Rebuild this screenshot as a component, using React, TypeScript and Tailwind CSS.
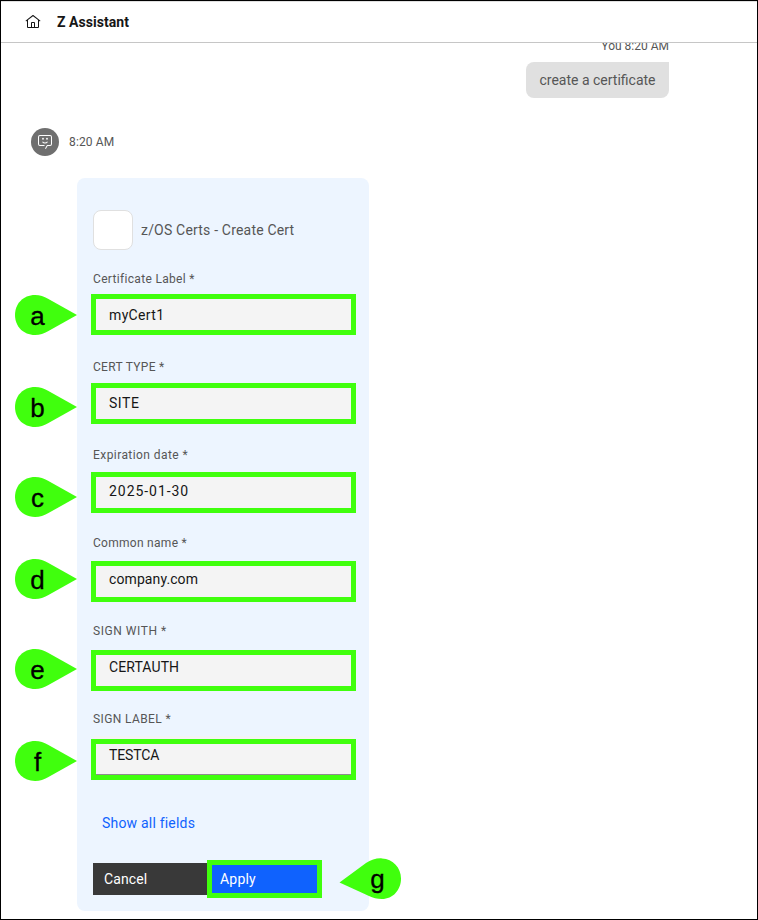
type Field = { label: string; value: string; labelClass: string; valueClass: string; frame: string; text: string; strip?: boolean };

const fields: Field[] = [
  { label: 'Certificate Label *', value: 'myCert1', labelClass: 'tracking-[0.32px]', valueClass: 'tracking-[0.35px]', frame: 'mt-[6px]', text: 'top-[6px]' },
  { label: 'CERT TYPE *', value: 'SITE', labelClass: 'tracking-[0.3px]', valueClass: 'tracking-[0.55px]', frame: 'mt-[7px]', text: 'top-[5px]' },
  { label: 'Expiration date *', value: '2025-01-30', labelClass: 'tracking-[0.43px]', valueClass: 'tracking-[0.95px]', frame: 'mt-[8px]', text: 'top-[4px]' },
  { label: 'Common name *', value: 'company.com', labelClass: 'tracking-[0.28px]', valueClass: 'tracking-[0.1px]', frame: 'mt-[9px]', text: 'top-[3px]' },
  { label: 'SIGN WITH *', value: 'CERTAUTH', labelClass: 'tracking-[0.55px]', valueClass: 'tracking-[0.1px]', frame: 'mt-[10px]', text: 'top-[2px]' },
  { label: 'SIGN LABEL *', value: 'TESTCA', labelClass: 'tracking-[0.38px]', valueClass: 'tracking-[-0.15px]', frame: 'mt-[11px]', text: 'top-[1px]', strip: true },
];

const markers = [
  { letter: 'a', place: 'top-[293px]' },
  { letter: 'b', place: 'top-[385px]' },
  { letter: 'c', place: 'top-[475px]' },
  { letter: 'd', place: 'top-[557px]' },
  { letter: 'e', place: 'top-[647px]' },
  { letter: 'f', place: 'top-[739px]' },
];

function HomeIcon() {
  return (
    <svg width="16" height="16" viewBox="0 0 32 32" fill="#161616">
      <path d="M16.61 2.21a1 1 0 0 0-1.24 0L1 13.42 2.24 15 4 13.62V26a2 2 0 0 0 2 2h20a2 2 0 0 0 2-2V13.63L29.76 15 31 13.43ZM18 26h-4v-8h4Zm2 0v-8a2 2 0 0 0-2-2h-4a2 2 0 0 0-2 2v8H6V12.06l10-7.79 10 7.8V26Z" />
    </svg>
  );
}

function BotIcon() {
  return (
    <svg width="16" height="16" viewBox="0 0 32 32" fill="#fff">
      <path d="M16 19a6.99 6.99 0 0 1-5.833-3.129l1.666-1.107a5 5 0 0 0 8.334 0l1.666 1.107A6.99 6.99 0 0 1 16 19Z" />
      <circle cx="20" cy="9.5" r="1.8" />
      <circle cx="12" cy="9.5" r="1.8" />
      <path d="M17.736 30 16 29l4-7h6a2 2 0 0 0 2-2V6a2 2 0 0 0-2-2H6a2 2 0 0 0-2 2v14a2 2 0 0 0 2 2h9v2H6a4 4 0 0 1-4-4V6a4 4 0 0 1 4-4h20a4 4 0 0 1 4 4v14a4 4 0 0 1-4 4h-4.835Z" />
    </svg>
  );
}

function Marker({ letter, place }: { letter: string; place: string }) {
  return (
    <div className={`absolute left-[13px] h-[42px] w-[64px] ${place}`}>
      <svg className="absolute inset-0" width="64" height="42" viewBox="0 0 64 42">
        <path d="M21 1C9 1 1 10 1 21s8 20 20 20c5 0 9-1.500 13-3.700L63 21 34 4.700C30 2.500 26 1 21 1Z" fill="#40ff0d" />
      </svg>
      <span className="absolute left-0 top-[7px] w-[47px] text-center font-['Liberation_Sans',Arial,sans-serif] text-[26px] leading-[30px] text-black [-webkit-text-stroke:0.3px_black]">{letter}</span>
    </div>
  );
}

export default function App() {
  return (
    <div className="relative flex h-[920px] w-[758px] flex-col overflow-hidden border border-black bg-white font-[Roboto,'Noto_Sans',sans-serif] text-sm text-[#565656]">
      <header className="flex h-[42px] shrink-0 items-center border-t border-b border-t-[#e0e0e0] border-b-[#c6c6c6] pl-6">
        <HomeIcon />
        <h1 className="ml-4 text-sm font-bold tracking-[0.05px] text-[#161616]">Z Assistant</h1>
      </header>
      <main className="flex min-h-0 flex-1 flex-col overflow-hidden">
        <div className="mr-[88px] flex flex-col items-end">
          <div className="-mt-[6px] h-[18px] text-xs leading-[18px]">You 8:20 AM</div>
          <div className="mt-[7px] flex h-9 w-[143px] items-center justify-center rounded-lg rounded-tr-none bg-[#e0e0e0]">create a certificate</div>
        </div>
        <div className="mt-[30px] ml-[30px] flex h-7 items-center gap-[10px] text-xs tracking-[0.15px]">
          <div className="flex size-7 items-center justify-center rounded-full bg-[#6f6f6f]"><BotIcon /></div>
          8:20 AM
        </div>
        <section className="mt-[22px] ml-[76px] h-[733px] w-[292px] shrink-0 rounded-lg bg-[#edf5ff] px-4 pt-8">
          <div className="flex h-10 items-center gap-2 tracking-[0.19px]">
            <div className="size-10 rounded-lg border border-[#e0e0e0] bg-white" />
            z/OS Certs - Create Cert
          </div>
          <div className="mt-5">
            {fields.map((f) => (
              <div key={f.label} className="h-[88px]">
                <div className={`h-[18px] text-xs leading-[18px] ${f.labelClass}`}>{f.label}</div>
                <div className={`relative -ml-[2px] h-[41px] w-[265px] border-[5px] border-[#40ff0d] bg-[#f4f4f4] ${f.frame}`}>
                  {f.strip && <div className="absolute -top-[8px] left-[-3px] h-[3px] w-[260px] bg-[#f4f4f4]" />}
                  <div className={`absolute left-[13px] leading-5 text-[#161616] ${f.text} ${f.valueClass}`}>{f.value}</div>
                  {f.strip && <div className="absolute bottom-0 left-0 h-px w-full bg-[#8d8d8d]" />}
                </div>
              </div>
            ))}
          </div>
          <div className="mt-[15px] ml-[9px] h-5 leading-5 tracking-[0.2px] text-[#0f62fe]">Show all fields</div>
          <div className="mt-[27px] flex h-[38px] items-center">
            <button className="h-8 w-[114px] bg-[#393939] pl-[11px] text-left tracking-[0.1px] text-white">Cancel</button>
            <button className="h-[38px] w-[115px] border-[5px] border-[#40ff0d] bg-[#0f62fe] pl-2 text-left tracking-[0.2px] text-white">Apply</button>
          </div>
        </section>
      </main>
      {markers.map((m) => <Marker key={m.letter} letter={m.letter} place={m.place} />)}
      <div className="absolute left-[338px] top-[857px] h-[43px] w-[64px]">
        <svg className="absolute inset-0" width="64" height="43" viewBox="0 0 64 43">
          <path d="M0.500 24.500 27 5C32 1.600 38 0 43 .4 54 1 62 9.500 62 20.500 62 32 54 41 43 41c-5 0-9-1-13-3Z" fill="#40ff0d" />
        </svg>
        <span className="absolute left-[15px] top-[6px] w-[47px] text-center font-['Liberation_Sans',Arial,sans-serif] text-[26px] leading-[30px] text-black [-webkit-text-stroke:0.3px_black]">g</span>
      </div>
    </div>
  );
}
